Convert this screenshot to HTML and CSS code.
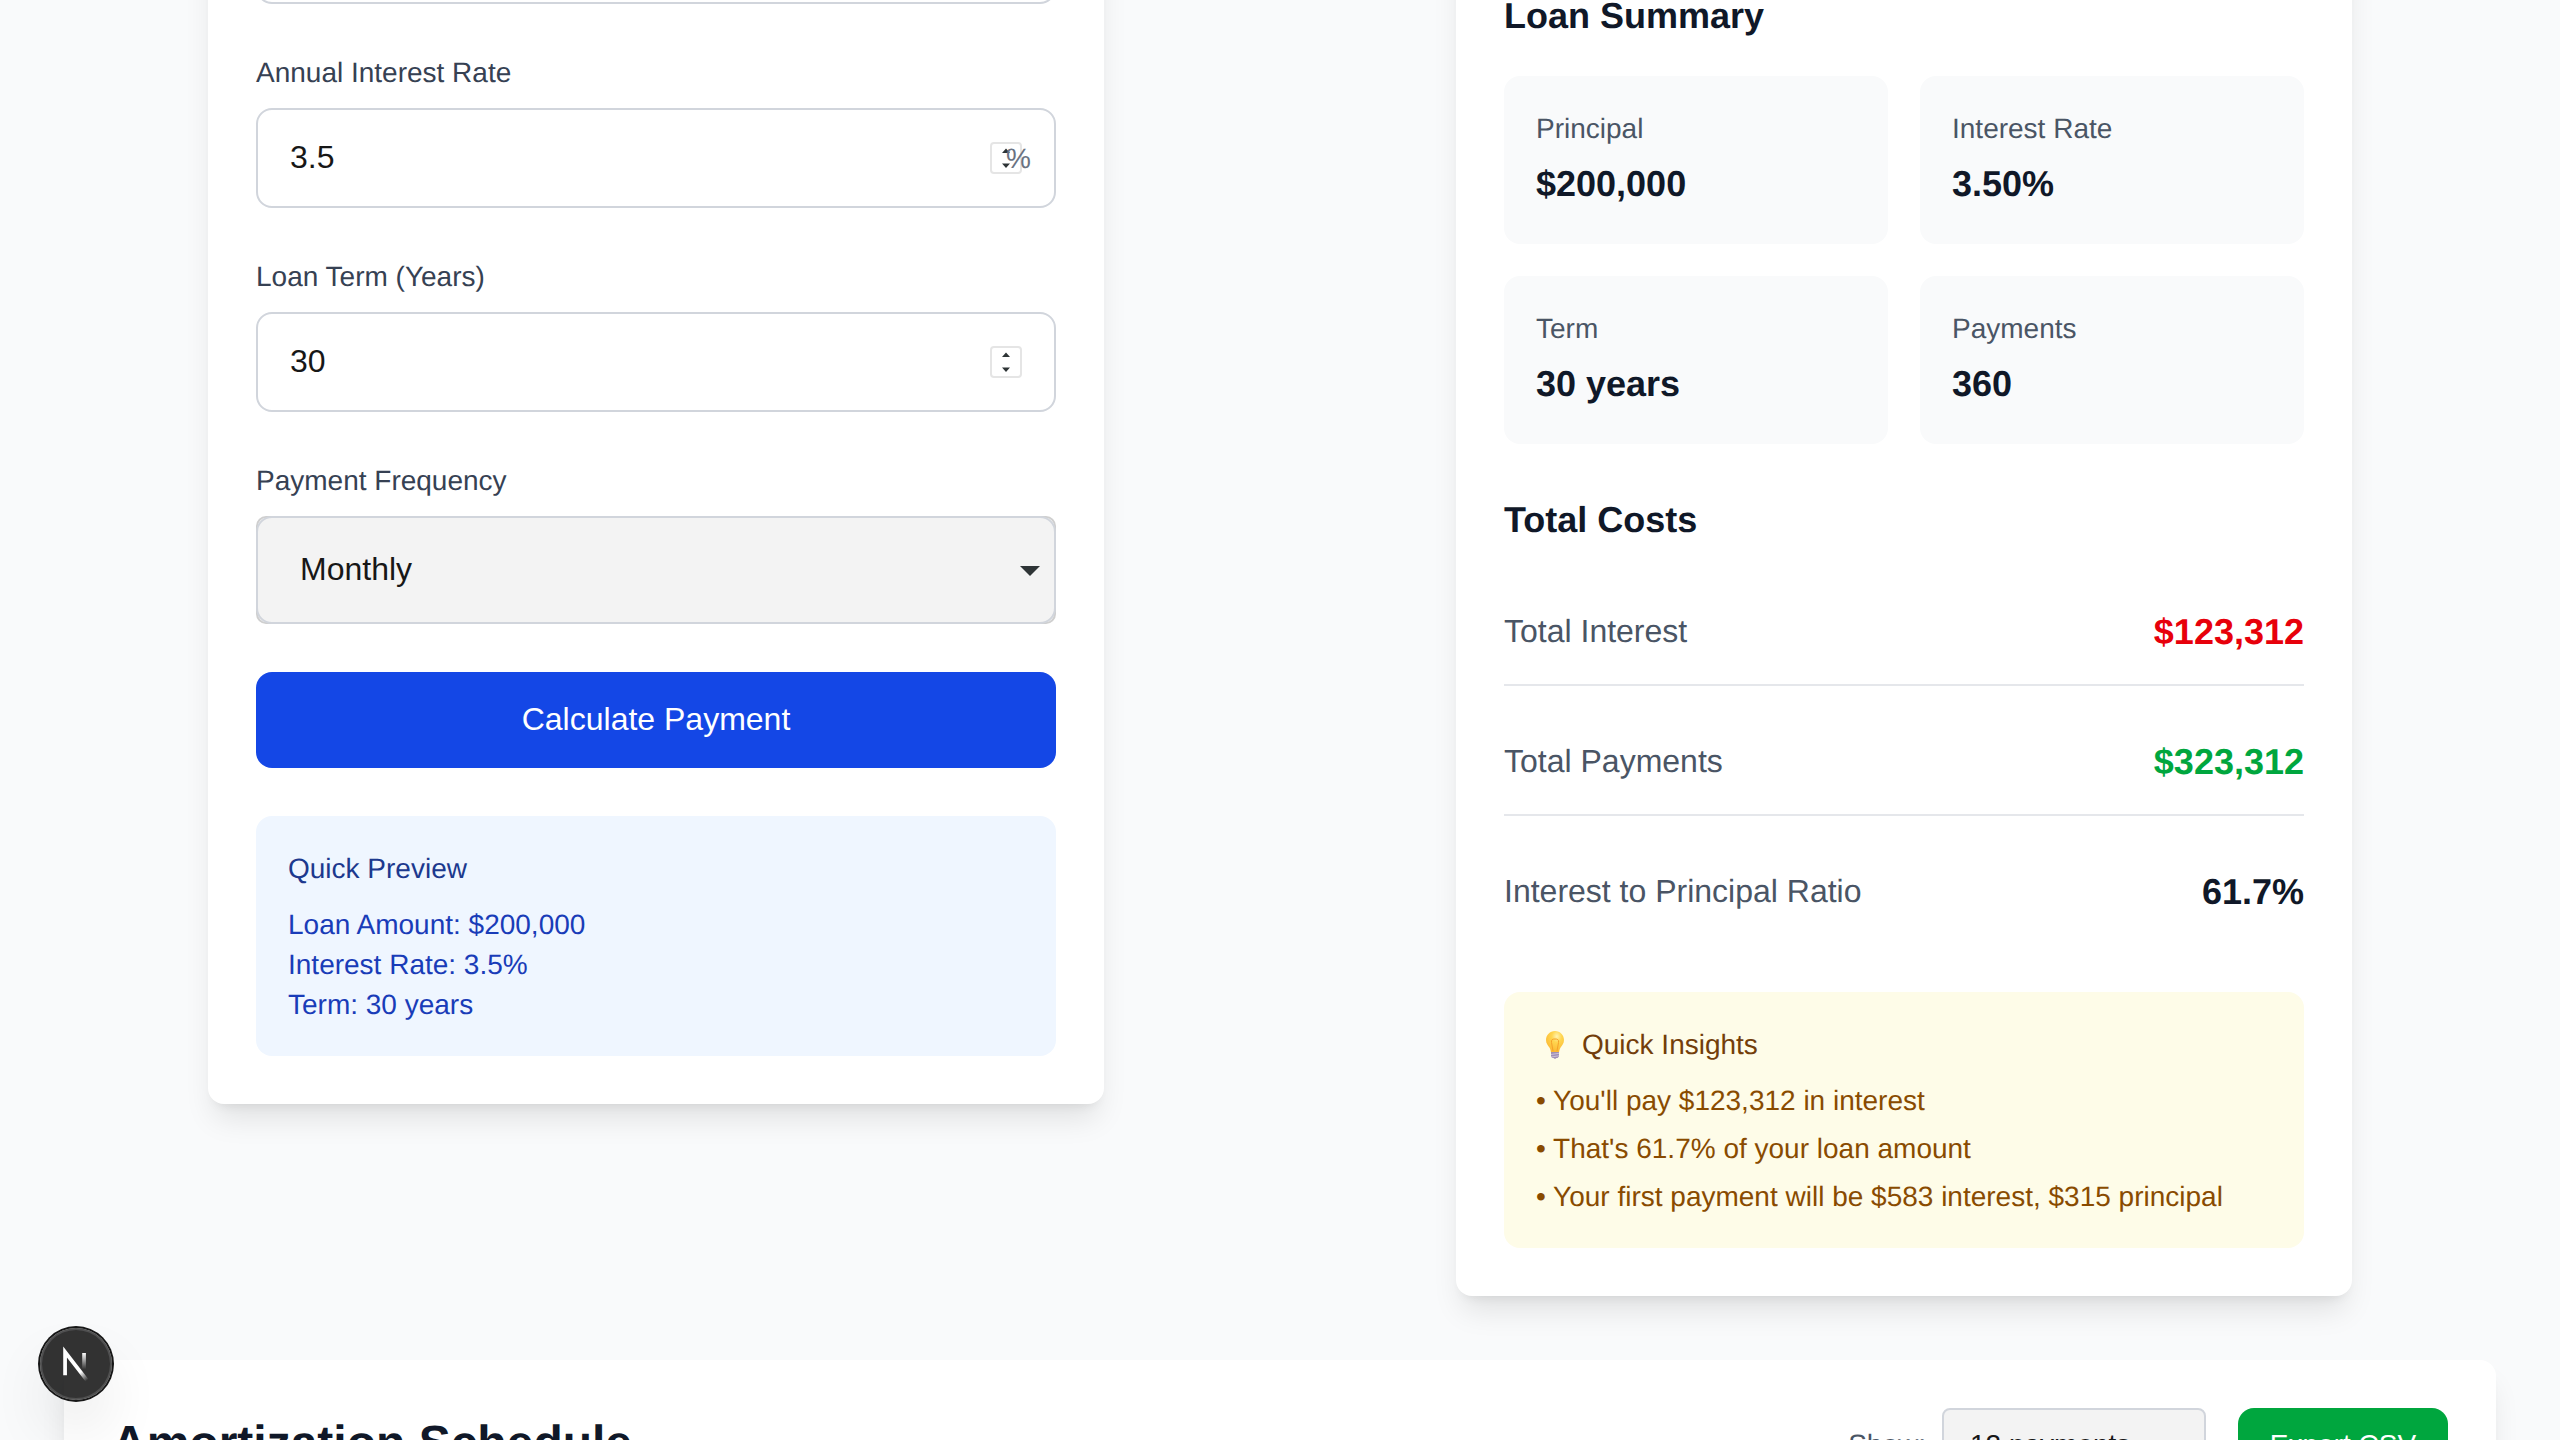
FILE: index.html
```
<!DOCTYPE html>
<html lang="en">
<head>
<meta charset="utf-8">
<title>Loan Calculator</title>
<link rel="stylesheet" href="styles.css">
</head>
<body>
<main class="page">
  <div class="columns">
    <section class="card form-card">
      <div class="input-box"></div>

      <div class="field">
        <label class="label" for="rate">Annual Interest Rate</label>
        <div class="input-box">
          <input class="input" id="rate" value="3.5">
          <svg class="spinner" viewBox="0 0 32 32"><rect x="1" y="1" width="30" height="30" rx="3" fill="#fff" stroke="#e5e5e5" stroke-width="2"/><path d="M12 11 16 6.5 20 11ZM12 21.5 16 26 20 21.5Z" fill="#2e3436"/></svg>
          <span class="suffix">%</span>
        </div>
      </div>

      <div class="field">
        <label class="label" for="term">Loan Term (Years)</label>
        <div class="input-box">
          <input class="input" id="term" value="30">
          <svg class="spinner" viewBox="0 0 32 32"><rect x="1" y="1" width="30" height="30" rx="3" fill="#fff" stroke="#e5e5e5" stroke-width="2"/><path d="M12 11 16 6.5 20 11ZM12 21.5 16 26 20 21.5Z" fill="#2e3436"/></svg>
        </div>
      </div>

      <div class="field">
        <label class="label" for="frequency">Payment Frequency</label>
        <div class="select-box">
          <select class="select" id="frequency"><option>Monthly</option></select>
          <svg class="caret" viewBox="0 0 20 10"><path d="M0 0H20L10 10Z" fill="#2e3436"/></svg>
        </div>
      </div>

      <button class="primary">Calculate Payment</button>

      <div class="preview">
        <h4 class="preview-title">Quick Preview</h4>
        <p>Loan Amount: $200,000</p>
        <p>Interest Rate: 3.5%</p>
        <p>Term: 30 years</p>
      </div>
    </section>

    <section class="card summary-card">
      <h3 class="heading">Loan Summary</h3>
      <div class="tiles">
        <div class="tile"><div class="tile-label">Principal</div><div class="value">$200,000</div></div>
        <div class="tile"><div class="tile-label">Interest Rate</div><div class="value">3.50%</div></div>
        <div class="tile"><div class="tile-label">Term</div><div class="value">30 years</div></div>
        <div class="tile"><div class="tile-label">Payments</div><div class="value">360</div></div>
      </div>

      <h3 class="heading costs-heading">Total Costs</h3>
      <div class="costs">
        <div class="row"><span class="row-label">Total Interest</span><span class="amount red">$123,312</span></div>
        <div class="row"><span class="row-label">Total Payments</span><span class="amount green">$323,312</span></div>
        <div class="row"><span class="row-label">Interest to Principal Ratio</span><span class="amount">61.7%</span></div>
      </div>

      <div class="insights">
        <h4 class="insights-title">
          <svg class="bulb" viewBox="0 0 36 36">
            <defs><radialGradient id="glass" cx=".6" cy=".25" r=".8"><stop offset="0" stop-color="#fff3b0"/><stop offset=".35" stop-color="#ffd54f"/><stop offset="1" stop-color="#fbb52f"/></radialGradient></defs>
            <path d="M19 4C13.900 4 10 8 10 13c0 3.600 2 5.400 3.400 7.500C14.500 22.200 14.700 23.800 15 25.500h8c.3-1.700.5-3.300 1.600-5C26 18.400 28 16.600 28 13 28 8 24.100 4 19 4Z" fill="url(#glass)"/>
            <path d="M17 24 15.500 15.500c-.5-3 1-3.500 3.500-3.500s4 .5 3.500 3.500L21 24" fill="none" stroke="#f5a12a" stroke-width="1"/>
            <path d="M15 25h8v4.500l-1.500 1.500h-1L19 32l-1.500-1H16.500L15 29.500Z" fill="#a08fb5"/>
            <path d="M15 27.500 23 26.300M15 30 23 28.800" stroke="#d5cbe0" stroke-width=".8"/>
          </svg>
          <span>Quick Insights</span>
        </h4>
        <ul class="insights-list">
          <li>• You'll pay $123,312 in interest</li>
          <li>• That's 61.7% of your loan amount</li>
          <li>• Your first payment will be $583 interest, $315 principal</li>
        </ul>
      </div>
    </section>
  </div>

  <section class="card schedule">
    <h2 class="schedule-title">Amortization Schedule</h2>
    <div class="tools">
      <span class="show">Show:</span>
      <select class="count"><option>12 payments</option></select>
      <button class="export">Export CSV</button>
    </div>
  </section>
</main>

<div class="dev-badge">
  <svg viewBox="0 0 40 40">
    <defs>
      <linearGradient id="diagonal" gradientUnits="userSpaceOnUse" x1="9.956" y1="11.123" x2="15.478" y2="17.967"><stop stop-color="#fff"/><stop offset=".604" stop-color="#fff" stop-opacity="0"/></linearGradient>
      <linearGradient id="stem" gradientUnits="userSpaceOnUse" x1="11.822" y1="1.4" x2="11.791" y2="9.625"><stop stop-color="#fff"/><stop offset="1" stop-color="#fff" stop-opacity="0"/></linearGradient>
    </defs>
    <g transform="translate(12.2 13)" fill="none" stroke-width="1.86">
      <path d="M13.3 15.2 2.34 1V12.6" stroke="url(#diagonal)"/>
      <path d="M11.825 1.5V13.1" stroke="url(#stem)"/>
    </g>
  </svg>
</div>
</body>
</html>
```
FILE: styles.css
```
* { box-sizing: border-box; margin: 0; padding: 0; }

body {
  height: 1440px;
  overflow: hidden;
  background: #f9fafb;
  color: #171717;
  font-family: "Liberation Sans", Arial, sans-serif;
  font-size: 32px;
  line-height: 48px;
  text-rendering: geometricPrecision;
}

input, select, button { font: inherit; color: inherit; border: 0; background: none; appearance: none; outline: 0; }
h2, h3, h4 { font: inherit; }
ul { list-style: none; }

.page { height: 1440px; padding: 0 64px; overflow: hidden; }

.columns {
  display: grid;
  grid-template-columns: 1fr 1fr;
  gap: 64px;
  align-items: start;
  margin: -200px 0 64px;
}

.card {
  background: #fff;
  border-radius: 16px;
  box-shadow: 0 20px 30px -6px rgba(0, 0, 0, .1), 0 8px 12px -8px rgba(0, 0, 0, .1);
}

.form-card, .summary-card { width: 896px; margin: 0 auto; padding: 48px; }
.form-card { display: flex; flex-direction: column; gap: 48px; padding-top: 104px; }
.summary-card { padding-top: 188px; }

.label { display: block; padding-top: 1px; margin-bottom: 15px; color: #364153; font-size: 28px; line-height: 40px; }

.input-box {
  position: relative;
  display: flex;
  align-items: center;
  height: 100px;
  padding: 0 32px;
  border: 2px solid #d1d5dc;
  border-radius: 16px;
}
.input { flex: 1; min-width: 0; height: 48px; margin-bottom: 2px; }
.spinner { width: 32px; height: 32px; }
.suffix { position: absolute; right: 23px; top: 25px; color: #6a7282; font-size: 28px; }

.select-box {
  position: relative;
  display: flex;
  align-items: center;
  height: 108px;
  padding: 0 14px 0 42px;
  border: 2px solid #cfcfcf;
  border-radius: 10px;
  background: #f3f3f3;
}
.select-box::after {
  content: "";
  position: absolute;
  inset: -2px;
  border: 2px solid #d1d5dc;
  border-radius: 16px;
  pointer-events: none;
}
.select { flex: 1; height: 48px; margin-bottom: 2px; }
.caret { width: 20px; height: 10px; margin-top: 2px; }

.primary { height: 96px; padding-bottom: 2px; border-radius: 16px; background: #1447e6; color: #fff; }

.preview {
  padding: 33px 32px 31px;
  border-radius: 16px;
  background: #eff6ff;
  color: #193cb8;
  font-size: 28px;
  line-height: 40px;
}
.preview-title { margin-bottom: 16px; color: #1c398e; }

.heading { margin-bottom: 32px; color: #101828; font-size: 36px; font-weight: 700; line-height: 56px; }
.costs-heading { margin-top: 48px; }

.tiles { display: grid; grid-template-columns: 1fr 1fr; gap: 32px; }
.tile { padding: 33px 32px 32px; border-radius: 16px; background: #f9fafb; }
.tile-label { margin-bottom: 7px; color: #4a5565; font-size: 28px; line-height: 40px; }
.value, .amount { color: #101828; font-size: 36px; font-weight: 700; line-height: 56px; }

.costs { display: flex; flex-direction: column; gap: 24px; margin-bottom: 48px; }
.row {
  display: flex;
  justify-content: space-between;
  align-items: center;
  padding: 24px 0;
  border-bottom: 2px solid #e5e7eb;
  color: #4a5565;
}
.row:last-child { border-bottom: 0; }
.row-label { margin-bottom: 2px; }
.red { color: #e7000b; }
.green { color: #00a63e; }

.insights {
  padding: 33px 32px 31px;
  border-radius: 16px;
  background: #fefce8;
  color: #894b00;
  font-size: 28px;
  line-height: 40px;
}
.insights-title { display: flex; align-items: center; gap: 10px; margin-bottom: 16px; color: #733e0a; }
.bulb { width: 36px; height: 36px; }
.insights-list { display: flex; flex-direction: column; gap: 8px; }

.schedule { display: flex; justify-content: space-between; align-items: center; height: 600px; padding: 48px 48px 480px; }
.schedule-title { color: #101828; font-size: 48px; font-weight: 700; line-height: 64px; }
.tools { display: flex; align-items: center; font-size: 28px; line-height: 40px; }
.show { padding-top: 2px; margin-right: 16px; color: #4a5565; }
.count {
  width: 264px;
  height: 72px;
  margin-right: 32px;
  padding: 2px 26px 0;
  border: 2px solid #d1d5dc;
  border-radius: 8px;
  background: #f3f3f3;
}
.export { width: 210px; height: 72px; padding-top: 2px; border-radius: 16px; background: #00a63e; color: #fff; }

.dev-badge {
  position: fixed;
  left: 40px;
  top: 1328px;
  width: 72px;
  height: 72px;
  border-radius: 50%;
  background: rgba(0, 0, 0, .8);
  box-shadow: 0 0 0 2px #171717, inset 0 0 0 2px rgba(255, 255, 255, .14), 0 32px 64px -16px rgba(0, 0, 0, .24);
}
.dev-badge svg { display: block; width: 80px; height: 80px; margin: -4px; }
```
